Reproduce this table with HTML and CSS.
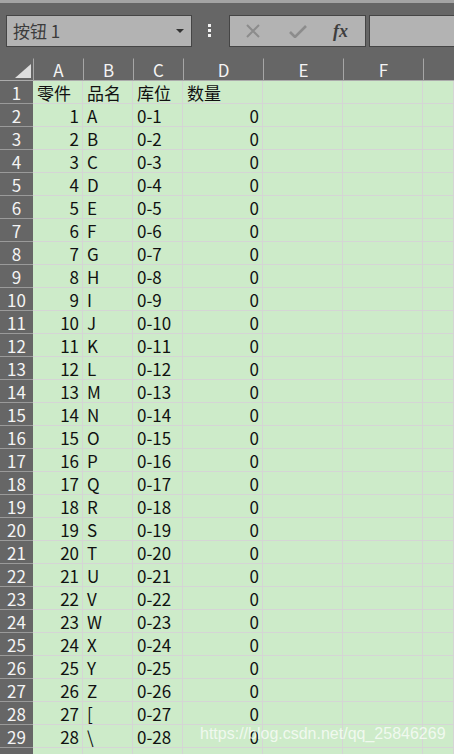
FILE: index.html
```html
<!DOCTYPE html>
<html lang="zh-CN">

<head>
    <meta charset="UTF-8">
    <title>按钮 1</title>
    <link rel="stylesheet" href="styles.css">
</head>

<body>
    <!--편집줄-->
    <header class="toolbar">
        <div class="namebox">
            <span class="name">按钮 1</span>
            <span class="caret"></span>
        </div>
        <div class="grip">
            <i></i><i></i><i></i>
        </div>
        <div class="fxbox">
            <svg class="ico" width="16" height="16" viewBox="0 0 16 16">
                <path d="M2 2 L14 14 M14 2 L2 14" stroke="#8c8c8c" stroke-width="2" fill="none" />
            </svg>
            <svg class="ico" width="18" height="14" viewBox="0 0 18 14">
                <path d="M1 8 L6 13 L17 2" stroke="#8c8c8c" stroke-width="2.6" fill="none" />
            </svg>
            <span class="fx">fx</span>
        </div>
        <div class="formula"></div>
    </header>

    <!--시트-->
    <main class="sheet" id="sheet">
        <div class="corner"><span class="tri"></span></div>
        <div class="colhead">A</div>
        <div class="colhead">B</div>
        <div class="colhead">C</div>
        <div class="colhead">D</div>
        <div class="colhead">E</div>
        <div class="colhead">F</div>
        <div class="colhead"></div>
    </main>

    <div class="watermark">https://blog.csdn.net/qq_25846269</div>

    <script>
        // 행 만들기
        const sheet = document.getElementById('sheet');

        const addRow = (num, cells) => {
            let html = `<div class="rowhead">${num}</div>`;
            cells.forEach((c) => {
                html += `<div class="cell ${c[1] || ''}">${c[0]}</div>`;
            });
            sheet.insertAdjacentHTML('beforeend', html);
        };

        addRow(1, [['零件'], ['品名'], ['库位'], ['数量'], [''], [''], ['']]);

        for (let i = 1; i <= 28; i++) {
            addRow(i + 1, [
                [i, 'num'],
                [String.fromCharCode(64 + i)],
                ['0-' + i],
                [0, 'num'],
                [''], [''], ['']
            ]);
        }

        addRow('', [[''], [''], [''], [''], [''], [''], ['']]);
    </script>
</body>

</html>
```

FILE: styles.css
```css
html,
body {
    margin: 0;
    padding: 0;
}

body {
    position: relative;
    width: 454px;
    height: 754px;
    overflow: hidden;
    background: #666;
    font-family: "Noto Sans CJK SC", "Liberation Sans", sans-serif;
}

/*편집줄*/
.toolbar {
    display: flex;
    align-items: flex-start;
    height: 58px;
    padding: 12px 0 0 6px;
    box-sizing: border-box;
    border-top: 3px solid #a4a4a4;
    background: #666;
}

.namebox {
    display: flex;
    align-items: center;
    justify-content: space-between;
    width: 186px;
    height: 32px;
    padding: 0 7px 0 6px;
    box-sizing: border-box;
    border: 1px solid #454545;
    background: #b3b3b3;
}

.name {
    color: #3c3c3c;
    font-size: 17px;
    line-height: 30px;
}

.caret {
    width: 0;
    height: 0;
    border-left: 4px solid transparent;
    border-right: 4px solid transparent;
    border-top: 4px solid #333;
}

.grip {
    display: flex;
    flex-direction: column;
    gap: 2px;
    width: 37px;
    padding: 9px 0 0 16px;
    box-sizing: border-box;
}

.grip i {
    display: block;
    width: 3px;
    height: 3px;
    background: #f2f2f2;
}

.fxbox {
    display: flex;
    align-items: center;
    width: 137px;
    height: 32px;
    padding-left: 15px;
    box-sizing: border-box;
    border: 1px solid #454545;
    background: #b3b3b3;
}

.fxbox .ico:nth-child(2) {
    margin-left: 28px;
}

.fx {
    margin-left: 26px;
    color: #3e3e3e;
    font: italic bold 18px/30px "Liberation Serif", serif;
}

.formula {
    flex: 1;
    height: 32px;
    margin-left: 3px;
    box-sizing: border-box;
    border: 1px solid #454545;
    border-right: 0;
    background: #b3b3b3;
}

/*시트*/
.sheet {
    display: grid;
    grid-template-columns: 33px 50px 50px 50px 80px 80px 80px 31px;
    grid-auto-rows: 23px;
    font-size: 17px;
    line-height: 20px;
}

.corner,
.colhead {
    position: relative;
    background: #666;
    border-bottom: 1px solid #ababab;
    box-sizing: border-box;
}

.tri {
    position: absolute;
    left: 15px;
    top: 6px;
    width: 0;
    height: 0;
    border-left: 16px solid transparent;
    border-bottom: 14px solid #dedede;
}

.colhead {
    padding-top: 1px;
    border-left: 1px solid #a6a6a6;
    border-top: 1px solid #666;
    color: #f4f4f4;
    text-align: center;
}

.rowhead {
    padding-top: 2px;
    background: #666;
    border-bottom: 1px solid #9a9a9a;
    color: #f4f4f4;
    text-align: center;
    box-sizing: border-box;
    overflow: hidden;
}

.cell {
    padding: 2px 4px 0;
    background: #cdebc9;
    border-right: 1px solid #d5d5d5;
    border-bottom: 1px solid #d5d5d5;
    box-sizing: border-box;
    color: #111;
    white-space: nowrap;
    overflow: hidden;
}

.cell.num {
    padding-right: 3px;
    text-align: right;
}

/*워터마크*/
.watermark {
    position: absolute;
    left: 200px;
    top: 725px;
    color: rgba(255, 255, 255, 0.72);
    font: 16px "Liberation Sans", Arial, sans-serif;
}
```
